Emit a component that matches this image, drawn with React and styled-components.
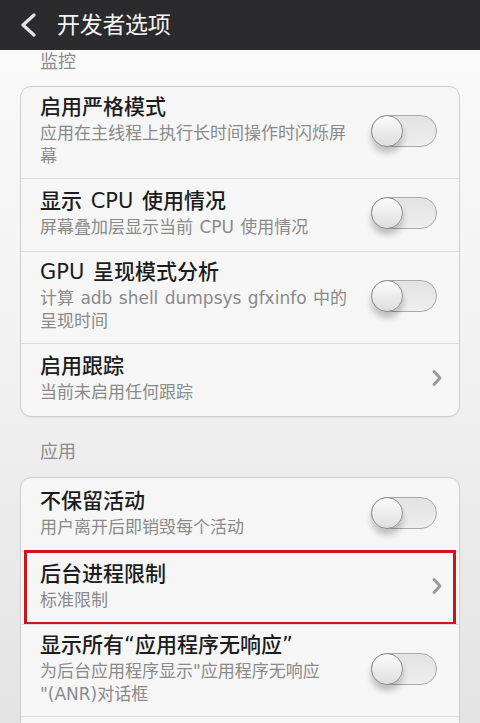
import styled, { createGlobalStyle } from "styled-components";

const GlobalStyle = createGlobalStyle`
  html, body {
    margin: 0;
    padding: 0;
  }
  body {
    font-family: "DejaVu Sans", "Noto Sans CJK SC", sans-serif;
    background: #f2f2f2;
  }
`;

const sections = [
  {
    label: "监控",
    items: [
      { title: "启用严格模式", desc: "应用在主线程上执行长时间操作时闪烁屏幕", type: "switch" },
      { title: "显示 CPU 使用情况", desc: "屏幕叠加层显示当前 CPU 使用情况", type: "switch" },
      { title: "GPU 呈现模式分析", desc: "计算 adb shell dumpsys gfxinfo 中的呈现时间", type: "switch" },
      { title: "启用跟踪", desc: "当前未启用任何跟踪", type: "link" },
    ],
  },
  {
    label: "应用",
    items: [
      { title: "不保留活动", desc: "用户离开后即销毁每个活动", type: "switch" },
      { title: "后台进程限制", desc: "标准限制", type: "link", marked: true },
      {
        title: "显示所有“应用程序无响应”",
        desc: (
          <>
            为后台应用程序显示"应用程序无响应
            <br />
            "(ANR)对话框
          </>
        ),
        type: "switch",
      },
      { title: "", desc: "", type: "none" },
    ],
  },
];

export default function App() {
  return (
    <Screen>
      <GlobalStyle />
      <Header>
        <BackButton>
          <svg width="18" height="24" viewBox="0 0 18 24">
            <path d="M15 2 L4 12 L15 22" fill="none" stroke="#e6e6e6" strokeWidth="3.2" strokeLinecap="round" strokeLinejoin="round" />
          </svg>
        </BackButton>
        <Title>开发者选项</Title>
      </Header>
      {sections.map((section, si) => (
        <Section key={si}>
          <SectionLabel first={si === 0}>{section.label}</SectionLabel>
          <Card>
            {section.items.map((item, i) => (
              <Row key={i} marked={item.marked} first={i === 0}>
                <RowText>
                  <RowTitle>{item.title}</RowTitle>
                  <RowDesc>{item.desc}</RowDesc>
                </RowText>
                {item.type === "switch" && (
                  <Switch>
                    <Knob />
                  </Switch>
                )}
                {item.type === "link" && (
                  <Chevron>
                    <svg width="12" height="18" viewBox="0 0 12 18">
                      <path d="M3 2.5 L9 9 L3 15.5" fill="none" stroke="#9a9a9a" strokeWidth="3" strokeLinecap="round" strokeLinejoin="round" />
                    </svg>
                  </Chevron>
                )}
              </Row>
            ))}
          </Card>
        </Section>
      ))}
    </Screen>
  );
}

const Screen = styled.div`
  width: 480px;
  height: 723px;
  overflow: hidden;
  background: linear-gradient(#fbfbfb 0%, #f1f1f1 50%, #e3e3e3 100%);
`;

const Header = styled.div`
  height: 50px;
  background: #2b2b2d;
  display: flex;
  align-items: center;
  padding-left: 19px;
`;

const BackButton = styled.div`
  width: 18px;
  height: 24px;
  display: flex;
  margin-right: 20px;
`;

const Title = styled.div`
  color: #f4f4f4;
  font-size: 23px;
  line-height: 30px;
  letter-spacing: -0.3px;
`;

const Section = styled.div`
  display: flex;
  flex-direction: column;
`;

const SectionLabel = styled.div`
  font-size: 18px;
  line-height: 24px;
  color: #8c8c8c;
  padding: ${(p) => (p.first ? "0" : "23px")} 0 12px 40px;
  margin-bottom: ${(p) => (p.first ? "0" : "1px")};
`;

const Card = styled.div`
  margin: 0 20px;
  border: 1px solid #cecece;
  border-radius: 11px;
  background: #f6f6f6;
  box-shadow: 0 1px 1px rgba(0, 0, 0, 0.05);
`;

const Row = styled.div`
  position: relative;
  min-height: 73px;
  box-sizing: border-box;
  display: flex;
  align-items: center;
  padding: 6px 22px 10px 19px;
  border-top: ${(p) => (p.first ? "none" : "1px solid #dcdcdc")};

  ${(p) =>
    p.marked &&
    `
    &::after {
      content: "";
      position: absolute;
      left: 3px;
      right: 3px;
      top: -2px;
      bottom: -1px;
      border: 3px solid #c8161d;
      pointer-events: none;
    }
  `}
`;

const RowText = styled.div`
  width: 316px;
  display: flex;
  flex-direction: column;
`;

const RowTitle = styled.div`
  font-size: 21px;
  line-height: 29px;
  color: #1c1c1c;
  font-weight: 500;
  word-spacing: 2px;
`;

const RowDesc = styled.div`
  font-size: 17px;
  line-height: 23px;
  color: #8a8a8a;
  word-spacing: 1px;
`;

const Switch = styled.div`
  margin-left: auto;
  width: 66px;
  height: 32px;
  box-sizing: border-box;
  border-radius: 16px;
  border: 1px solid #a9a9a9;
  background: linear-gradient(#e2e2e2, #eeeeee);
  position: relative;
  flex-shrink: 0;
`;

const Knob = styled.div`
  position: absolute;
  left: -1px;
  top: -1px;
  width: 32px;
  height: 32px;
  box-sizing: border-box;
  border-radius: 50%;
  border: 1px solid #8f8f8f;
  background: linear-gradient(#fbfbfb, #dedede);
  box-shadow: 0 6px 6px rgba(0, 0, 0, 0.22);
`;

const Chevron = styled.div`
  margin-left: auto;
  margin-right: -6px;
  display: flex;
`;
